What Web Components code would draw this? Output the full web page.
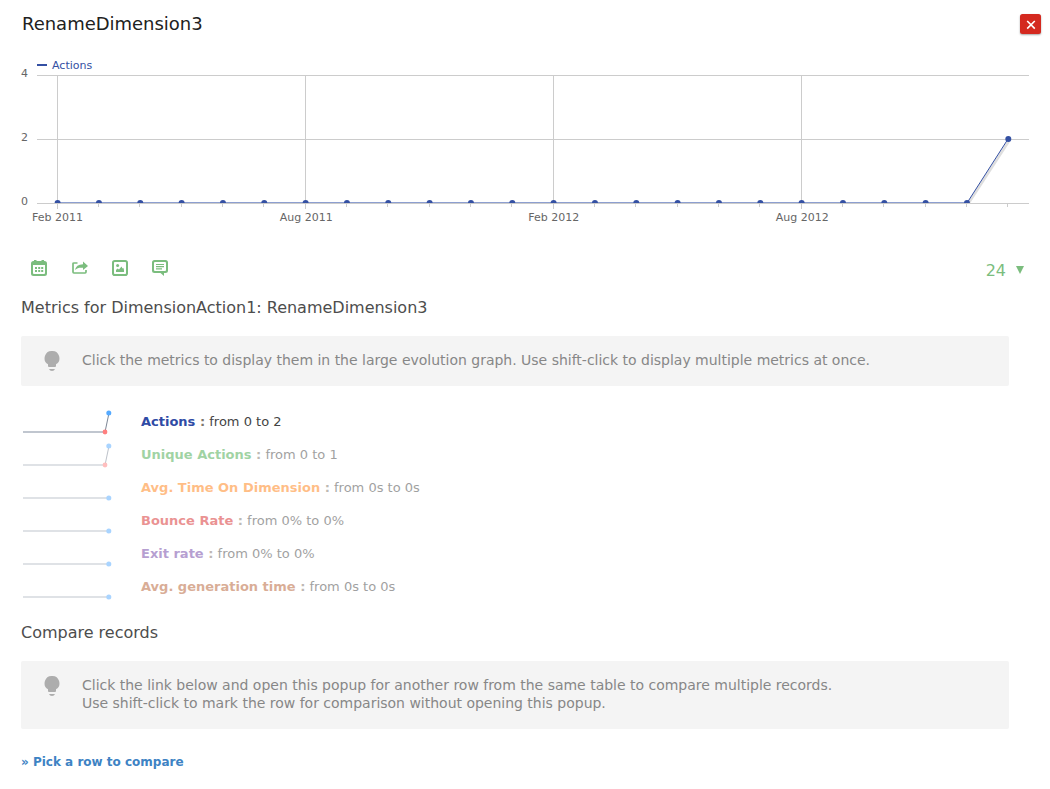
<!DOCTYPE html>
<html lang="en">
<head>
<meta charset="utf-8">
<title>Row evolution</title>
<style>
html,body{margin:0;background:#fff}
body{font-family:"DejaVu Sans",sans-serif}
</style>
</head>
<body>
<row-evolution></row-evolution>
<script>
const define = (name, html) => customElements.define(name, class extends HTMLElement {
  connectedCallback() {
    if (this.shadowRoot) return;
    const t = document.createElement('template');
    t.innerHTML = typeof html === 'function' ? html(this) : html;
    this.attachShadow({mode: 'open'}).append(t.content.cloneNode(true));
  }
});

define('popup-header', `<style>
:host{display:flex;justify-content:space-between;align-items:flex-start;height:50px;padding:14px 9px 0 22px;box-sizing:border-box}
h1{margin:-1px 0 0;font-size:18px;font-weight:400;line-height:21px;letter-spacing:-.02px;color:#212121}
button{width:21px;height:20px;padding:0;border:0;border-radius:2.5px;background:#d4291f;box-shadow:0 1px 2px rgba(0,0,0,.35);display:flex}
svg{display:block}
</style><h1><slot></slot></h1>
<button aria-label="Close"><svg width="21" height="20" viewBox="0 0 21 20"><path d="M7.2 7l7.6 7.6M14.8 7l-7.6 7.6" stroke="#fff" stroke-width="1.6"/></svg></button>`);

define('evolution-chart', () => {
  const X = i => 57.5 + i * 41.335;
  let grid = '', ticks = '', dots = '';
  for (const y of [75.5, 139.5, 203.5]) grid += `<path d="M37 ${y}H1029"/>`;
  for (let i = 0; i < 24; i++) {
    const x = Math.floor(X(i) - .3) + .5;
    ticks += i % 6 === 0 ? `<path d="M${57.5 + i / 6 * 248} 75V209"/>` : `<path d="M${x} 204V207"/>`;
    dots += `<circle cx="${X(i) + .1}" cy="${i === 23 ? 139 : 203}" r="3"/>`;
  }
  return `<style>
:host{display:block;height:192px}
svg{display:block}
text{font-size:11px;fill:#666}
.legend{fill:#3450a3}
.mid{text-anchor:middle}.end{text-anchor:end}
</style><svg width="1050" height="180" viewBox="0 50 1050 180">
<defs><clipPath id="plot"><rect x="37" y="70" width="993" height="133"/></clipPath></defs>
<g stroke="#ccc" fill="none">${grid}${ticks}</g>
<g clip-path="url(#plot)">
<path d="M968.4 203.5L1009.3 140.5" stroke="#000" stroke-opacity=".13" stroke-width="2.600"/>
<path d="M57.5 202.5H967" stroke="#8d9fd0" fill="none"/>
<path d="M967 203L1008 139" stroke="#3450a3" fill="none"/>
<g fill="#3450a3">${dots}</g></g>
<rect x="37" y="64" width="10" height="2" fill="#3450a3"/>
<text class="legend" x="52" y="69">Actions</text>
<text class="end" x="28" y="77">4</text><text class="end" x="28" y="141">2</text><text class="end" x="28" y="205">0</text>
<text class="mid" x="57.5" y="221">Feb 2011</text><text class="mid" x="306.3" y="221">Aug 2011</text><text class="mid" x="553.7" y="221">Feb 2012</text><text class="mid" x="802.3" y="221">Aug 2012</text>
</svg>`;
});

const icons = {
  calendar: `<path fill-rule="evenodd" d="M2.5 1H3V0h2.5v1h5V0H13v1h.5Q16 1 16 3.5v10Q16 16 13.500 16h-11Q0 16 0 13.500v-10Q0 1 2.500 1zM2 5v8q0 1 1 1h10q1 0 1-1V5z"/><path d="M4 7h2v2H4zm3.200 0h2v2h-2zm3 0h2v2h-2zM4 10h2v2H4zm3.200 0h2v2h-2zm3 0h2v2h-2z"/>`,
  share: `<path d="M5.500 3H1.900Q1 3 1 3.900v8.200q0 .9.900.9h11.200q.9 0 .9-.9V10" fill="none" stroke="currentColor" stroke-width="1.700"/><path d="M11 1.500L16 6l-5 4V7.800C7.500 7.500 5 8 3.200 10 3.500 6.500 6.500 4.300 11 4.200z"/>`,
  image: `<rect x="1" y="1" width="14" height="14" rx="1.800" fill="none" stroke="currentColor" stroke-width="2"/><circle cx="5.600" cy="5.500" r="1.500"/><path d="M4 12v-2l1.500-1.500L7 9.500 9.500 6.500l1 2 .8-.8L12 10v2z"/>`,
  comment: `<path fill-rule="evenodd" d="M2.500 0h11Q16 0 16 2.500v8q0 2.500-2.500 2.500H12v3L8.500 13h-6Q0 13 0 10.500v-8Q0 0 2.500 0zM3 2Q2 2 2 3v7q0 1 1 1h10q1 0 1-1V3q0-1-1-1z"/><path d="M4 3.900h8v1.100H4zm0 2.200h8v1.100H4zm0 2.200h6v1.100H4z"/>`
};
define('tool-icon', el => `<style>:host{display:block;width:16px;height:16px;color:#7bbd7e}svg{display:block}</style>
<svg width="16" height="16" viewBox="0 0 16 16" fill="currentColor">${icons[el.getAttribute('name')]}</svg>`);

define('chart-toolbar', `<style>
:host{display:flex;height:56px;padding:18px 26px 0 31px;box-sizing:border-box;justify-content:space-between;color:#7bbd7e}
nav{display:flex;gap:24px}
nav :first-child{margin-right:1px}
.limit{display:flex;align-items:flex-start;gap:10px;font-size:16px;line-height:20px}
.limit span{margin-top:1px}
svg{display:block;margin-top:6px}
</style><nav><tool-icon name="calendar"></tool-icon><tool-icon name="share"></tool-icon><tool-icon name="image"></tool-icon><tool-icon name="comment"></tool-icon></nav>
<div class="limit"><span>24</span><svg width="8" height="8"><path d="M0 0h8L4 8z" fill="currentColor"/></svg></div>`);

define('section-title', `<style>:host{display:block;margin-left:21px;font-size:16px;line-height:20px;letter-spacing:-.01px;color:#4d4d4d}</style><slot></slot>`);

define('hint-box', `<style>
:host{display:flex;margin:18px 41px 0 21px;padding:15px 0 17px;border-radius:2px;background:#f4f4f4;font-size:14px;line-height:18px;letter-spacing:-.01px;color:#878787}
svg{display:block;flex:none;margin:0 22px -2px 23px}
</style><svg width="16" height="20" viewBox="0 0 16 20" fill="#adadad"><path d="M8 0a7.200 7.200 0 0 1 4 13.300V15q0 1-1 1H5q-1 0-1-1v-1.700A7.200 7.200 0 0 1 8 0zM5 18h6q-.7 2-3 2t-3-2z"/></svg><div><slot></slot></div>`);

define('metric-row', el => {
  const rise = el.hasAttribute('rise');
  return `<style>
:host{display:flex;height:33px;opacity:.5}
:host([active]){opacity:1}
svg{display:block;flex:none;margin-right:28px}
p{margin:2px 0 0;font-size:13px;line-height:20px;color:#444;white-space:pre}
b{color:#80766a}
.name{color:${el.getAttribute('color')}}
</style><svg width="92" height="30" viewBox="0 0 92 30">
<path d="M2 22H${rise ? 84 : 88}" stroke="#c0c6cf" stroke-width="2"/>
${rise ? '<path d="M84 22L88 3" stroke="#7d8796"/><circle cx="84" cy="22" r="2.400" fill="#ff7f7f"/>' : ''}
<circle cx="87.800" cy="${rise ? 3 : 22}" r="2.500" fill="#55aaff"/></svg>
<p><b><span class="name">${el.getAttribute('name')}</span> :</b> <slot></slot></p>`;
});

define('row-evolution', `<style>
:host{display:flex;flex-direction:column;width:1050px;height:789px;overflow:hidden}
.metrics{padding:24px 0 0 21px;height:213px}
a{margin:24px 0 0 21px;font-size:12px;line-height:18px;font-weight:700;color:#3e83c4;text-decoration:none}
</style>
<popup-header>RenameDimension3</popup-header>
<evolution-chart></evolution-chart>
<chart-toolbar></chart-toolbar>
<section-title>Metrics for DimensionAction1: RenameDimension3</section-title>
<hint-box>Click the metrics to display them in the large evolution graph. Use shift-click to display multiple metrics at once.</hint-box>
<div class="metrics">
<metric-row active rise name="Actions" color="#2f4ba5">from 0 to 2</metric-row>
<metric-row rise name="Unique Actions" color="#44a84a">from 0 to 1</metric-row>
<metric-row name="Avg. Time On Dimension" color="#ff7f0e">from 0s to 0s</metric-row>
<metric-row name="Bounce Rate" color="#d62728">from 0% to 0%</metric-row>
<metric-row name="Exit rate" color="#6f42a5">from 0% to 0%</metric-row>
<metric-row name="Avg. generation time" color="#b45d30">from 0s to 0s</metric-row>
</div>
<section-title>Compare records</section-title>
<hint-box>Click the link below and open this popup for another row from the same table to compare multiple records.<br>Use shift-click to mark the row for comparison without opening this popup.</hint-box>
<a>» Pick a row to compare</a>
`);
</script>
</body>
</html>
